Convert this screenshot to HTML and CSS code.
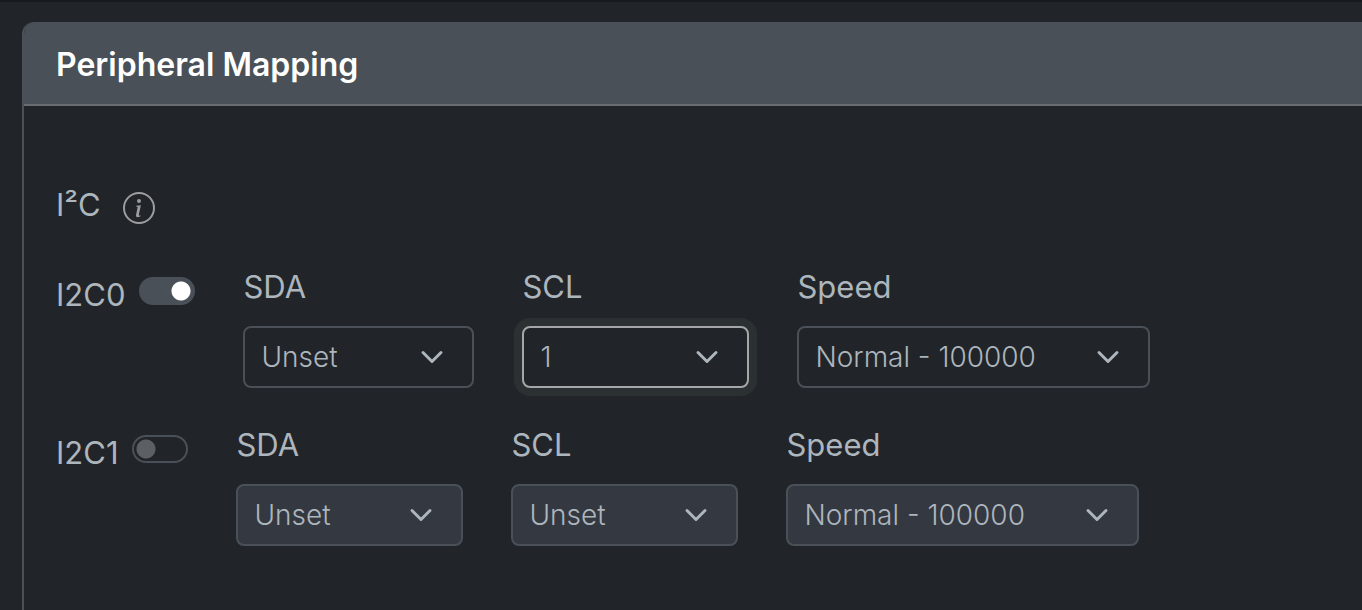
FILE: index.html
```html
<!DOCTYPE html>
<html lang="en">
<head>
<meta charset="utf-8">
<title>Peripheral Mapping</title>
<link rel="stylesheet" href="styles.css">
</head>
<body>
<main class="card">
  <h1 class="card-header">Peripheral Mapping</h1>
  <div class="card-body">
    <div class="section-title">
      <h2 class="section-name">I²C</h2>
      <button class="info" type="button" aria-label="About I²C">
        <svg viewBox="0 0 16 16" width="32" height="32" fill="currentColor" aria-hidden="true">
          <path d="M8 15A7 7 0 1 1 8 1a7 7 0 0 1 0 14m0 1A8 8 0 1 0 8 0a8 8 0 0 0 0 16"/>
          <path d="m8.93 6.588-2.29.287-.082.38.45.083c.294.07.352.176.288.469l-.738 3.468c-.194.897.105 1.319.808 1.319.545 0 1.178-.252 1.465-.598l.088-.416c-.2.176-.492.246-.686.246-.275 0-.375-.193-.304-.533zM9 4.5a1 1 0 1 1-2 0 1 1 0 0 1 2 0"/>
        </svg>
      </button>
    </div>
    <div class="row">
      <div class="toggle">
        <label for="i2c0">I2C0</label>
        <input class="switch" type="checkbox" role="switch" id="i2c0" checked>
      </div>
      <div class="field field-medium">
        <label for="sda0">SDA</label>
        <select class="select" id="sda0"><option>Unset</option></select>
      </div>
      <div class="field">
        <label for="scl0">SCL</label>
        <select class="select select-active" id="scl0"><option>1</option></select>
      </div>
      <div class="field field-wide">
        <label for="speed0">Speed</label>
        <select class="select" id="speed0"><option>Normal - 100000</option></select>
      </div>
    </div>
    <div class="row">
      <div class="toggle">
        <label for="i2c1">I2C1</label>
        <input class="switch" type="checkbox" role="switch" id="i2c1">
      </div>
      <div class="field">
        <label for="sda1">SDA</label>
        <select class="select" id="sda1" disabled><option>Unset</option></select>
      </div>
      <div class="field">
        <label for="scl1">SCL</label>
        <select class="select" id="scl1" disabled><option>Unset</option></select>
      </div>
      <div class="field field-wide">
        <label for="speed1">Speed</label>
        <select class="select" id="speed1" disabled><option>Normal - 100000</option></select>
      </div>
    </div>
  </div>
</main>
</body>
</html>
```
FILE: styles.css
```css
* {
  box-sizing: border-box;
}

body {
  margin: 0;
  min-height: 100vh;
  display: flex;
  flex-direction: column;
  padding: 20px 0 0 22px;
  border-top: 2px solid #16191d;
  background: #212529;
  color: #adb5bd;
  font-family: Inter, "Liberation Sans", sans-serif;
  font-size: 31px;
  line-height: 48px;
}

.card {
  flex: 1;
  border-left: 2px solid #495057;
  border-top-left-radius: 12px;
  overflow: hidden;
}

.card-header {
  margin: 0;
  padding: 19px 32px 15px;
  border-bottom: 2px solid #686d72;
  background: #495057;
  color: #fff;
  font-size: 32px;
  font-weight: 600;
}

.card-body {
  display: flex;
  flex-direction: column;
  padding: 75px 32px 0;
}

.section-title {
  display: flex;
  align-items: center;
  gap: 22px;
  margin-bottom: 34px;
}

.section-name {
  margin: 0;
  font-size: 31px;
  font-weight: 400;
}

.info {
  display: flex;
  margin-top: 6px;
  padding: 0;
  border: 0;
  background: none;
  color: #9b9d9f;
}

.row {
  display: flex;
  gap: 48px;
  margin-bottom: 33px;
}

.toggle {
  display: flex;
  align-items: flex-start;
  gap: 14px;
  padding-top: 8px;
}

.switch {
  appearance: none;
  width: 56px;
  height: 28px;
  margin: 6px 0 0;
  border: 2px solid #495057;
  border-radius: 14px;
  background: radial-gradient(circle at 12px 12px, #5c6064 9px, transparent 10px);
}

.switch:checked {
  background: radial-gradient(circle at 42px 14px, #fff 9px, #495057 10px) border-box;
}

.field {
  display: flex;
  flex-direction: column;
  gap: 15px;
  width: 227px;
}

.field-medium {
  width: 231px;
}

.field-wide {
  width: 353px;
}

.select {
  appearance: none;
  width: 100%;
  height: 62px;
  margin: 0;
  padding: 0 60px 0 16px;
  border: 2px solid #495057;
  border-radius: 8px;
  background: #212529 url("data:image/svg+xml,%3Csvg xmlns='http://www.w3.org/2000/svg' viewBox='0 0 16 16'%3E%3Cpath fill='none' stroke='%23adb5bd' stroke-linecap='round' stroke-linejoin='round' stroke-width='2' d='m2 5 6 6 6-6'/%3E%3C/svg%3E") no-repeat right 28px center / 24px 24px;
  color: #adb5bd;
  font-family: inherit;
  font-size: 28px;
  font-weight: 350;
  line-height: 42px;
  opacity: 1;
}

.select:disabled {
  background-color: #343840;
}

.select-active {
  border-color: #a4a6a8;
  box-shadow: 0 0 0 8px #2b3033;
}
```
